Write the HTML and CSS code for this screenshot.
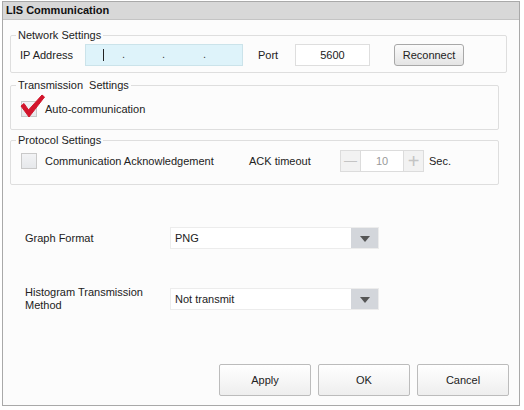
FILE: index.html
```html
<!DOCTYPE html>
<html lang="en">
<head>
    <meta charset="UTF-8">
    <title>LIS Communication</title>
    <link rel="stylesheet" href="styles.css">
</head>
<body>
    <div class="window">
        <div class="title-bar">LIS Communication</div>

        <div class="content">
            <fieldset class="group group-network">
                <legend>Network Settings</legend>
                <div class="row">
                    <span class="label label-ip">IP Address</span>
                    <div class="ip-input">
                        <span class="caret"></span>
                        <span class="dot dot-1">.</span>
                        <span class="dot dot-2">.</span>
                        <span class="dot dot-3">.</span>
                    </div>
                    <span class="label label-port">Port</span>
                    <div class="port-input">5600</div>
                    <button type="button" class="btn-reconnect">Reconnect</button>
                </div>
            </fieldset>

            <fieldset class="group group-transmission">
                <legend>Transmission&nbsp; Settings</legend>
                <div class="row">
                    <span class="checkbox checked">
                        <svg class="check" width="26" height="24" viewBox="0 0 26 24">
                            <path d="M1 12 L4 9.5 L8.5 16 L22 1 L24.5 3 L9 23 Z" fill="#d2142b" stroke="#d2142b" stroke-width="1" stroke-linejoin="round"/>
                        </svg>
                    </span>
                    <span class="check-label">Auto-communication</span>
                </div>
            </fieldset>

            <fieldset class="group group-protocol">
                <legend>Protocol Settings</legend>
                <div class="row">
                    <span class="checkbox"></span>
                    <span class="check-label ack-label">Communication Acknowledgement</span>
                    <span class="label label-ack">ACK timeout</span>
                    <div class="stepper">
                        <span class="step-btn">&#8212;</span>
                        <span class="step-value">10</span>
                        <span class="step-btn step-plus">+</span>
                    </div>
                    <span class="label label-sec">Sec.</span>
                </div>
            </fieldset>

            <div class="form-row row-graph">
                <span class="form-label">Graph Format</span>
                <div class="select">
                    <span class="select-text">PNG</span>
                    <span class="select-arrow"></span>
                </div>
            </div>

            <div class="form-row row-histogram">
                <span class="form-label">Histogram Transmission<br>Method</span>
                <div class="select">
                    <span class="select-text">Not transmit</span>
                    <span class="select-arrow"></span>
                </div>
            </div>

            <div class="actions">
                <button type="button" class="btn">Apply</button>
                <button type="button" class="btn">OK</button>
                <button type="button" class="btn">Cancel</button>
            </div>
        </div>
    </div>
</body>
</html>
```

FILE: styles.css
```css
body {
    margin: 0;
    padding: 0;
    background-color: #ffffff;
    font-family: "Liberation Sans", Arial, sans-serif;
    font-size: 11px;
    color: #1a1a1a;
}

.window {
    margin: 1px 0 0 2px;
    width: 516px;
    height: 403px;
    border: 1px solid #a9a9a9;
    background-color: #fcfcfc;
}

.title-bar {
    height: 17px;
    line-height: 17px;
    padding-left: 3px;
    background-color: #d8d8d8;
    border-bottom: 1px solid #c4c4c4;
    font-weight: bold;
    font-size: 11px;
    color: #111;
}

.content {
    padding: 0 10px 0 7px;
}

/* group boxes */
.group {
    margin: 0;
    padding: 0 0 0 9px;
    border: 1px solid #dedede;
    border-radius: 2px;
    background-color: #fcfcfc;
}

.group legend {
    padding: 0 2px;
    margin-left: -4px;
    font-size: 11px;
    line-height: 14px;
    color: #222;
}

.group-network {
    margin-top: 8px;
    width: 486px;
    height: 43px;
}

.group-transmission {
    margin-top: 5px;
    width: 478px;
    height: 50px;
}

.group-protocol {
    margin-top: 3px;
    width: 478px;
    height: 50px;
}

.row {
    display: flex;
    align-items: center;
}

.group-network .row {
    margin-top: 2px;
}

.group-transmission .row {
    margin-top: 9px;
    padding-left: 1px;
}

.group-protocol .row {
    margin-top: 3px;
    padding-left: 1px;
}

.label {
    color: #222;
}

.label-ip {
    width: 65px;
}

.ip-input {
    position: relative;
    width: 156px;
    height: 20px;
    background-color: #def3fa;
    border: 1px solid #cbe3ea;
}

.caret {
    position: absolute;
    left: 17px;
    top: 4px;
    width: 1px;
    height: 12px;
    background-color: #222;
}

.dot {
    position: absolute;
    top: 3px;
    font-size: 11px;
    color: #444;
}

.dot-1 { left: 36px; }
.dot-2 { left: 76px; }
.dot-3 { left: 117px; }

.label-port {
    margin-left: 15px;
    width: 37px;
}

.port-input {
    width: 73px;
    height: 20px;
    line-height: 20px;
    text-align: center;
    background-color: #fff;
    border: 1px solid #dedede;
}

.btn-reconnect {
    margin-left: 24px;
    width: 70px;
    height: 22px;
    padding: 0;
    font-family: inherit;
    font-size: 11px;
    color: #222;
    background: linear-gradient(#fbfbfb, #e4e4e4);
    border: 1px solid #a8a8a8;
    border-radius: 3px;
}

.checkbox {
    position: relative;
    width: 14px;
    height: 14px;
    border: 1px solid #c9c9c9;
    background: linear-gradient(#f2f3f5, #e6e8eb);
}

.check {
    position: absolute;
    left: -2px;
    top: -8px;
}

.check-label {
    margin-left: 8px;
    color: #222;
}

.ack-label {
    width: 204px;
}

.label-ack {
    width: 91px;
}

.stepper {
    display: flex;
    height: 22px;
}

.step-btn {
    width: 19px;
    height: 20px;
    line-height: 20px;
    text-align: center;
    color: #c4c4c4;
    font-size: 13px;
    background-color: #f2f2f2;
    border: 1px solid #dcdcdc;
}

.step-plus {
    font-size: 20px;
}

.step-value {
    width: 42px;
    height: 20px;
    line-height: 20px;
    text-align: center;
    color: #999;
    background-color: #fff;
    border-top: 1px solid #dcdcdc;
    border-bottom: 1px solid #dcdcdc;
}

.label-sec {
    margin-left: 5px;
}

/* selects */
.form-row {
    display: flex;
    align-items: center;
    padding-left: 15px;
}

.row-graph {
    margin-top: 42px;
}

.row-histogram {
    margin-top: 37px;
}

.form-label {
    width: 145px;
    line-height: 13px;
    color: #222;
}

.select {
    display: flex;
    width: 207px;
    height: 20px;
    background-color: #fff;
    border: 1px solid #ececec;
}

.select-text {
    flex: 1;
    line-height: 20px;
    padding-left: 4px;
    color: #222;
}

.select-arrow {
    position: relative;
    width: 27px;
    background-color: #d3d6db;
}

.select-arrow::after {
    content: "";
    position: absolute;
    left: 9px;
    top: 8px;
    border-left: 5px solid transparent;
    border-right: 5px solid transparent;
    border-top: 6px solid #555;
}

/* dialog buttons */
.actions {
    display: flex;
    justify-content: flex-end;
    gap: 7px;
    margin-top: 52px;
}

.btn {
    width: 92px;
    height: 32px;
    padding: 0;
    font-family: inherit;
    font-size: 11px;
    color: #222;
    background: linear-gradient(#ffffff, #eeeeee);
    border: 1px solid #bcbcbc;
    border-radius: 2px;
}
```
